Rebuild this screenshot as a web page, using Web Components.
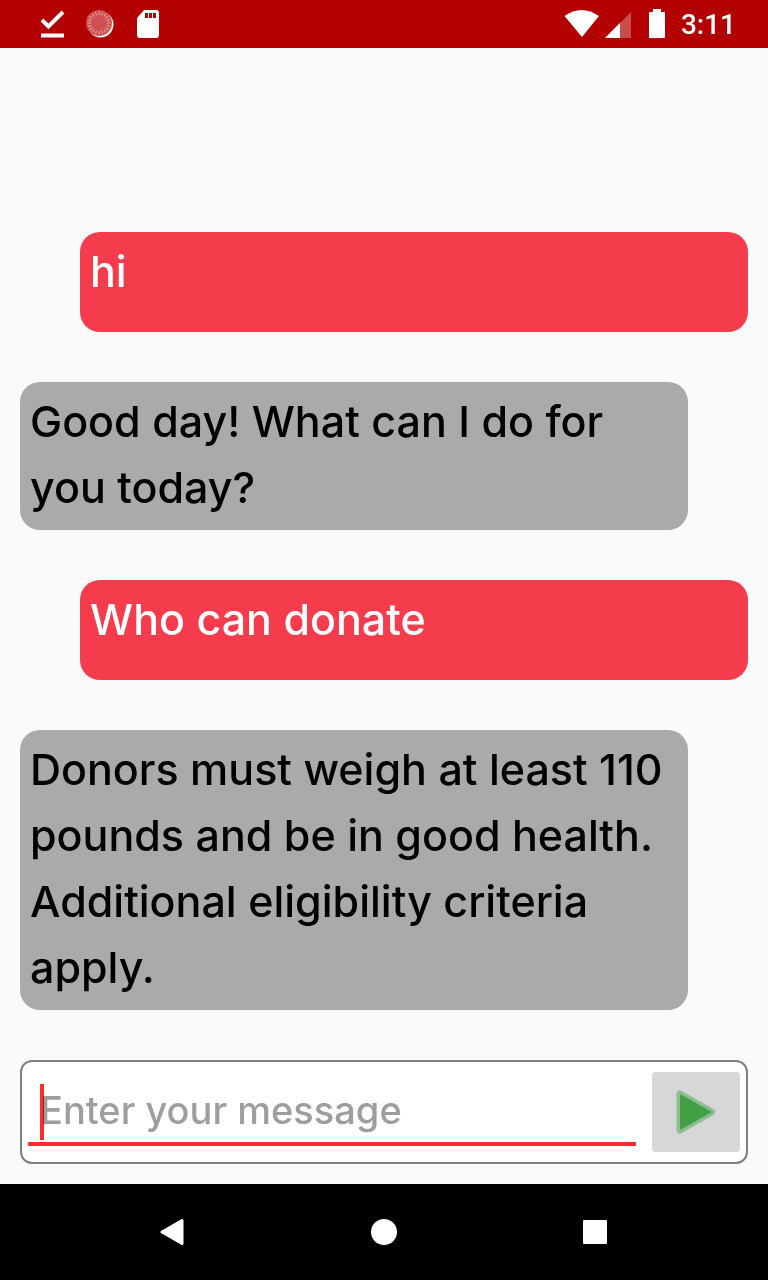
<!DOCTYPE html>
<html lang="en">
<head>
<meta charset="utf-8">
<meta name="viewport" content="width=device-width, initial-scale=1">
<title>Donor chat</title>
<style>
body { margin: 0; }
</style>
</head>
<body>
<chat-app>
  <chat-message from="user">hi</chat-message>
  <chat-message from="bot">Good day! What can I do for you today?</chat-message>
  <chat-message from="user">Who can donate</chat-message>
  <chat-message from="bot">Donors must weigh at least 110 pounds and be in good health. Additional eligibility criteria apply.</chat-message>
</chat-app>
<script>
const define = (name, html) => customElements.define(name, class extends HTMLElement {
  constructor() {
    super();
    this.attachShadow({ mode: 'open' }).innerHTML = html;
  }
});

// Radial ticks of the sync spinner
const ticks = Array.from({ length: 20 }, (_, i) =>
  `<path d="M14 2.500V6" transform="rotate(${i * 18} 14 14)"/>`).join('');

define('status-bar', `
<style>
:host { display: flex; align-items: center; justify-content: space-between; box-sizing: border-box; height: 48px; padding: 0 32px 0 36px; background: #b30000; color: #fff; font: 500 28px/48px Roboto, sans-serif; }
div { display: flex; align-items: center; }
.left { gap: 16px; }
svg { display: block; }
time { margin-left: 15px; padding-top: 2px; }
.bat { margin-left: 12px; }
</style>
<div class="left">
  <svg width="32" height="32" viewBox="0 0 32 32" fill="none" stroke="#fff" stroke-width="4"><path d="M6 12 12.500 18.500 27 4"/><path d="M5 27.500h23"/></svg>
  <svg width="32" height="32" viewBox="0 0 32 32"><circle cx="16.500" cy="16.500" r="13" fill="#fff"/><circle cx="15" cy="15" r="13" fill="#cf5050"/><g transform="translate(1 1)" stroke="#e8a8a8" stroke-width="1">${ticks}</g></svg>
  <svg width="32" height="32" viewBox="0 0 32 32"><path d="M12 2h12q3 0 3 3v22q0 3-3 3H8q-3 0-3-3V10z" fill="#fff"/><path d="M13 5h3v5h-3zM17 5h3v5h-3zM21 5h3v5h-3z" fill="#b30000"/></svg>
</div>
<div>
  <svg width="36" height="32" viewBox="0 0 36 32" fill="#fff"><path d="M0.500 8Q17.500-4 35 8L18 29z"/></svg>
  <svg width="36" height="32" viewBox="0 0 36 32"><path d="M31 4V30H5z" fill="#fff" opacity=".3"/><path d="M20 15V30H5z" fill="#fff"/></svg>
  <svg class="bat" width="18" height="32" viewBox="0 0 18 32" fill="#fff"><path d="M5 1h8v3h3q1 0 1 1v24q0 1-1 1H2q-1 0-1-1V5q0-1 1-1h3z"/></svg>
  <time>3:11</time>
</div>`);

define('chat-message', `
<style>
:host { display: block; box-sizing: border-box; min-height: 100px; padding: 6px 10px 10px; border-radius: 20px; font: 500 43px/66px Inter, sans-serif; }
:host([from="user"]) { margin-left: 60px; background: #f43c4c; color: #fff; }
:host([from="bot"]) { margin-right: 60px; background: #aaa; color: #000; }
p { margin: 0; }
</style>
<p><slot></slot></p>`);

define('chat-composer', `
<style>
:host { display: block; }
form { display: flex; align-items: flex-start; gap: 16px; padding: 10px 6px; border: 2px solid #808080; border-radius: 12px; background: #fff; }
.field { position: relative; flex: 1; min-width: 0; }
input { display: block; box-sizing: border-box; width: 100%; height: 74px; margin: 0; padding: 6px 12px 0; border: 0; border-bottom: 4px solid #ff2d2d; border-radius: 0; outline: 0; background: transparent; color: #000; caret-color: #ff2d2d; font: 500 38px/56px Inter, sans-serif; }
input::placeholder { color: #9e9e9e; opacity: 1; }
.caret { position: absolute; left: 12px; top: 12px; width: 4px; height: 56px; background: #ff2d2d; mix-blend-mode: multiply; }
button { display: grid; place-items: center; width: 88px; height: 80px; padding: 0; border: 0; border-radius: 4px; background: #d6d7d7; }
</style>
<form>
  <div class="field"><input type="text" placeholder="Enter your message" aria-label="Enter your message"><span class="caret"></span></div>
  <button type="button" aria-label="Send"><svg width="48" height="48" viewBox="0 0 48 48"><path d="M8 6 39.500 24 8 42z" fill="#8fbc91" stroke="#8fbc91" stroke-width="7" stroke-linejoin="round"/><path d="M8 6 40 24 8 42z" fill="#43a047"/></svg></button>
</form>`);

define('nav-bar', `
<style>
:host { display: block; background: #000; }
nav { display: grid; grid-template-columns: repeat(3, 1fr); justify-items: center; padding: 24px 66px; }
button { width: 48px; height: 48px; padding: 0; border: 0; background: transparent; }
svg { display: block; }
</style>
<nav>
  <button aria-label="Back"><svg width="48" height="48" viewBox="0 0 48 48"><path d="M34 12.500V35.500L14 24z" fill="#fff" stroke="#fff" stroke-width="3" stroke-linejoin="round"/></svg></button>
  <button aria-label="Home"><svg width="48" height="48" viewBox="0 0 48 48"><circle cx="24" cy="24" r="13" fill="#fff"/></svg></button>
  <button aria-label="Recent apps"><svg width="48" height="48" viewBox="0 0 48 48"><rect x="11" y="12" width="24" height="24" rx="1" fill="#fff"/></svg></button>
</nav>`);

define('chat-app', `
<style>
:host { display: flex; flex-direction: column; min-height: 100vh; background: #fafafa; }
main { flex: 1; display: flex; flex-direction: column; justify-content: flex-end; gap: 50px; padding: 20px; }
</style>
<status-bar></status-bar>
<main><slot></slot><chat-composer></chat-composer></main>
<nav-bar></nav-bar>`);
</script>
</body>
</html>
